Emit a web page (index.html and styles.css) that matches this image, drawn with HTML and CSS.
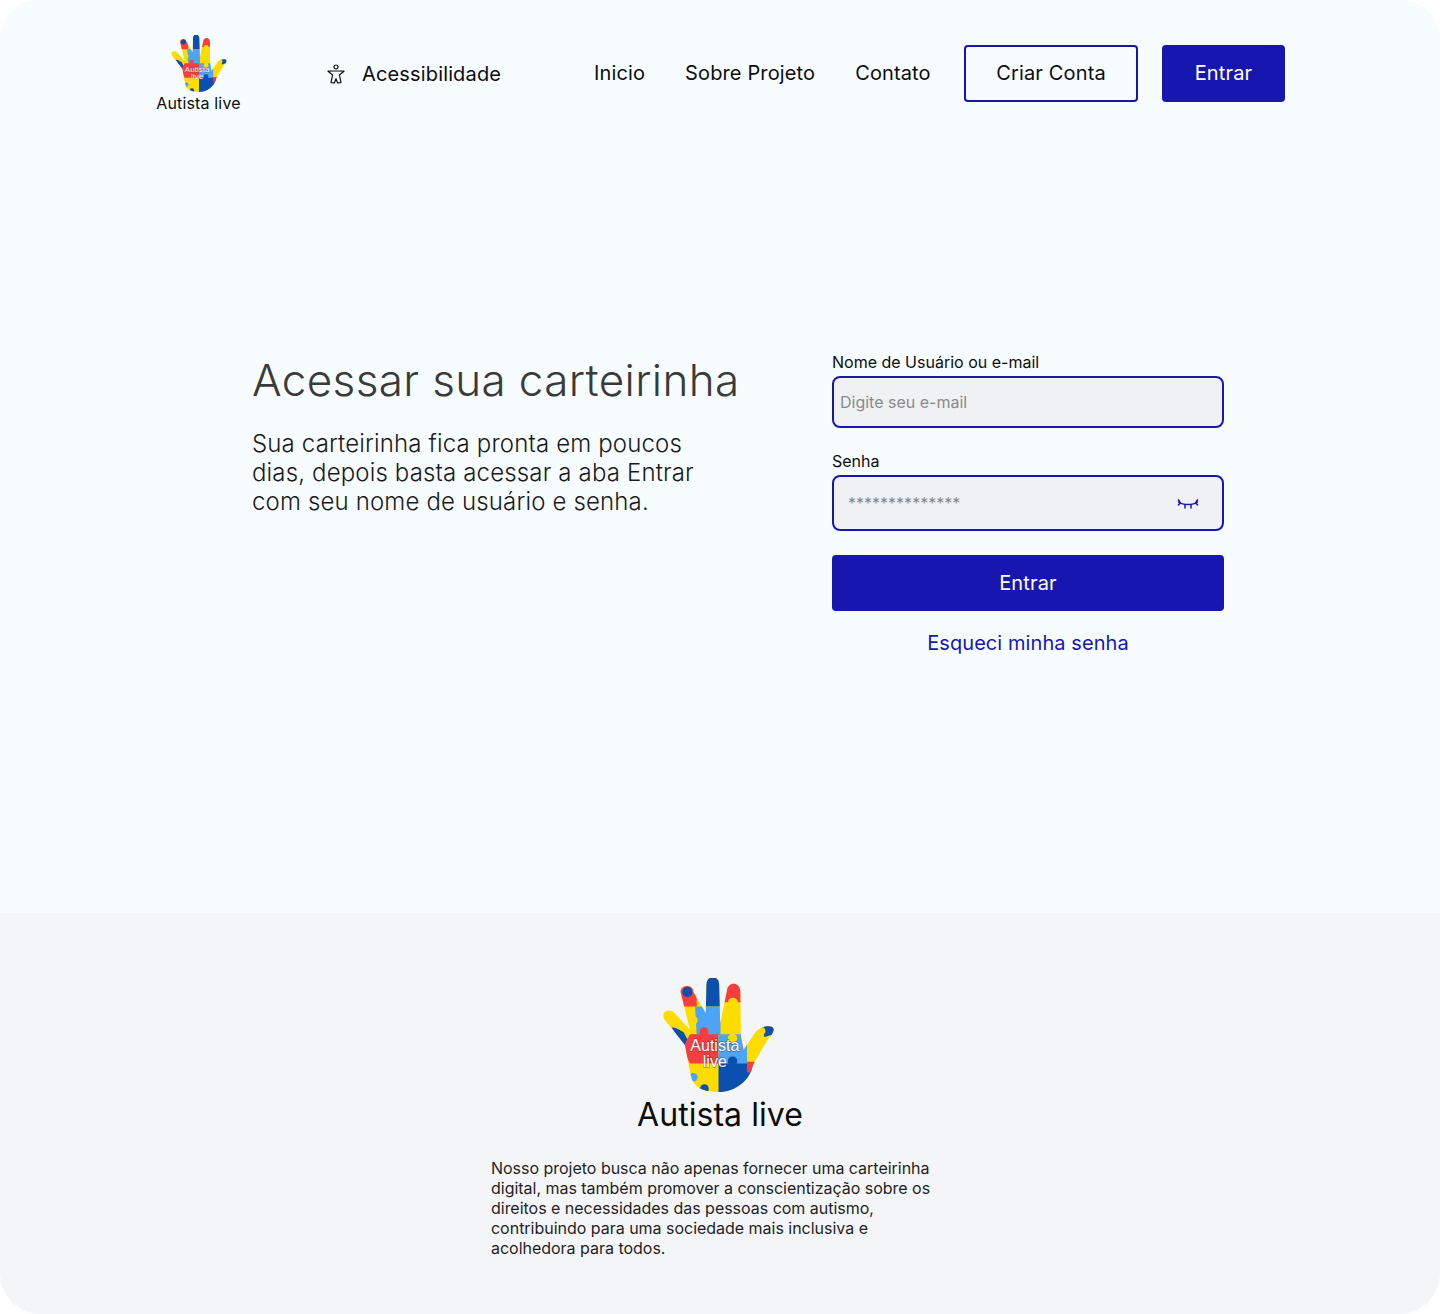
FILE: index.html
```html
<!DOCTYPE html>
<html lang="pt-BR">
<head>
<meta charset="utf-8">
<title>Autista live</title>
<link rel="stylesheet" href="styles.css">
</head>
<body>
<svg class="defs" width="0" height="0" aria-hidden="true">
  <defs>
    <clipPath id="hand">
      <path d="M122 82C122 58 160 58 160 82L197 145L199 60C199 30 237 30 237 60L240 175L260 80C262 50 298 50 300 80L302 215L310 255L345 202C355 185 400 175 400 195C398 205 392 212 385 218L337 300C330 345 285 380 235 380C185 380 160 365 152 330L135 240L75 165C60 145 85 125 105 145L150 195Z" />
    </clipPath>
    <symbol id="logo" viewBox="70 40 330 340">
      <g clip-path="url(#hand)">
        <rect x="60" y="30" width="350" height="360" fill="#ffdc00" />
        <rect x="197" y="30" width="44" height="95" fill="#0b4fb0" />
        <path d="M165 125H241V210H170Z" fill="#4da3f5" />
        <path d="M110 50H170V125H110Z" fill="#f63d3f" />
        <circle cx="142" cy="82" r="15" fill="#0b4fb0" />
        <circle cx="160" cy="166" r="13" fill="#ffdc00" />
        <path d="M250 40H305V112H250Z" fill="#f63d3f" />
        <circle cx="278" cy="114" r="15" fill="#ffdc00" />
        <path d="M95 188C112 186 122 200 130 200L152 240H130Z" fill="#0b4fb0" />
        <path d="M150 208H235V295H150L135 265V235Z" fill="#f63d3f" />
        <circle cx="192" cy="200" r="13" fill="#f63d3f" />
        <path d="M235 208H320V300H235Z" fill="#4da3f5" />
        <circle cx="277" cy="220" r="14" fill="#ffdc00" />
        <path d="M235 295H345V390H235Z" fill="#0b4fb0" />
        <circle cx="277" cy="288" r="14" fill="#0b4fb0" />
        <path d="M320 290H345L330 322H320Z" fill="#f63d3f" />
        <path d="M360 175H410V205L372 216Z" fill="#0b4fb0" />
        <circle cx="362" cy="198" r="13" fill="#ffdc00" />
        <circle cx="160" cy="336" r="13" fill="#4da3f5" />
        <circle cx="193" cy="370" r="13" fill="#0b4fb0" />
      </g>
      <text class="logo-mark" x="224" y="258">Autista</text>
      <text class="logo-mark" x="224" y="305">live</text>
    </symbol>
  </defs>
</svg>

<div class="page">
  <div class="hero">
    <header class="header">
      <a class="brand" href="#">
        <svg class="brand-mark"><use href="#logo" /></svg>
        <span class="brand-name">Autista live</span>
      </a>
      <a class="access" href="#">
        <svg class="access-icon" viewBox="0 0 18 20" fill="none" stroke="#111" stroke-width="1.2" stroke-linejoin="round">
          <circle cx="9" cy="3" r="2" />
          <path d="M1 7.2L6.4 7H11.6L17 7.2L12.4 11L14 18.6L10.6 19L9 14.6L7.4 19L4 18.6L5.6 11Z" />
        </svg>
        <span>Acessibilidade</span>
      </a>
      <nav class="nav">
        <a class="nav-link" href="#">Inicio</a>
        <a class="nav-link" href="#">Sobre Projeto</a>
        <a class="nav-link" href="#">Contato</a>
      </nav>
      <div class="actions">
        <a class="btn btn-outline" href="#">Criar Conta</a>
        <a class="btn btn-solid" href="#">Entrar</a>
      </div>
    </header>

    <main class="content">
      <section class="intro">
        <h1 class="title">Acessar sua carteirinha</h1>
        <p class="lead">Sua carteirinha fica pronta em poucos dias, depois basta acessar a aba Entrar com seu nome de usuário e senha.</p>
      </section>
      <form class="form">
        <label class="label" for="email">Nome de Usuário ou e-mail</label>
        <input class="field field-email" id="email" type="text" placeholder="Digite seu e-mail">
        <label class="label label-pass" for="pass">Senha</label>
        <div class="field field-pass">
          <input class="pass-input" id="pass" type="text" placeholder="**************">
          <svg class="eye" viewBox="0 0 22 12" fill="none" stroke="#1717af" stroke-width="1.5" stroke-linecap="round">
            <path d="M1.5 3C6 6.4 16 6.4 20.5 3" />
            <path d="M1.5 1L3.2 3.8L1.5 6" />
            <path d="M20.5 1L18.8 3.8L20.5 6" />
            <path d="M8 5.5V9M14 5.5V9" />
          </svg>
        </div>
        <a class="btn btn-solid btn-wide" href="#">Entrar</a>
        <a class="forgot" href="#">Esqueci minha senha</a>
      </form>
    </main>
  </div>

  <footer class="footer">
    <svg class="footer-mark"><use href="#logo" /></svg>
    <h2 class="footer-name">Autista live</h2>
    <p class="footer-text">Nosso projeto busca não apenas fornecer uma carteirinha digital, mas também promover a conscientização sobre os direitos e necessidades das pessoas com autismo, contribuindo para uma sociedade mais inclusiva e acolhedora para todos.</p>
  </footer>
</div>
</body>
</html>
```

FILE: styles.css
```css
* { box-sizing: border-box; }

html, body { margin: 0; padding: 0; background: #fff; }

body {
  font-family: Inter, "Liberation Sans", sans-serif;
  color: #0d0d0d;
}

a { color: inherit; text-decoration: none; }

.defs { display: block; height: 0; }

.logo-mark {
  font-family: "Liberation Sans", Arial, sans-serif;
  font-size: 48px;
  fill: #fff;
  text-anchor: middle;
  paint-order: stroke;
  stroke: rgba(60, 40, 60, 0.45);
  stroke-width: 4px;
}

.page {
  width: 1440px;
  height: 1314px;
  border-radius: 40px;
  overflow: hidden;
  background: #f4f5f7;
}

.hero { height: 913px; background: #f6fcff; }

.header {
  display: flex;
  align-items: flex-start;
  padding: 35px 155px 0 156px;
}

.brand { display: flex; flex-direction: column; align-items: center; width: 85px; }

.brand-mark { width: 56px; height: 57px; display: block; }

.brand-name {
  font-size: 16px;
  line-height: 20px;
  margin-top: 1px;
  letter-spacing: 0.15px;
  white-space: nowrap;
}

.access {
  display: flex;
  align-items: center;
  margin: 10px 0 0 86px;
  height: 57px;
  font-size: 20px;
  letter-spacing: 0.15px;
  width: 267px;
}

.access-icon { width: 18px; height: 20px; margin-right: 17px; flex: none; }

.nav { display: flex; gap: 40px; margin-top: 10px; }

.nav-link { font-size: 20px; line-height: 57px; letter-spacing: 0.13px; }

.actions { display: flex; gap: 24px; margin: 10px 0 0 auto; }

.btn {
  display: flex;
  align-items: center;
  justify-content: center;
  height: 56.5px;
  border-radius: 4px;
  font-size: 20px;
  letter-spacing: 0.15px;
}

.btn-outline { width: 174px; border: 2px solid #1717af; color: #0d0d0d; }

.btn-solid { width: 123px; background: #1717af; color: #fff; }

.btn-wide { width: 392px; height: 56px; margin-top: 24px; }

.content { display: flex; padding: 237px 0 0 252px; }

.intro { width: 580px; padding-top: 4px; }

.title {
  margin: 0;
  font-size: 44px;
  line-height: 53px;
  font-weight: 300;
  letter-spacing: 0.36px;
  color: #3a3a3a;
}

.lead {
  margin: 22px 0 0;
  width: 470px;
  font-size: 24px;
  line-height: 29px;
  font-weight: 350;
  letter-spacing: 0.15px;
  color: #1a1a1a;
}

.form { display: flex; flex-direction: column; width: 392px; }

.label { font-size: 16px; line-height: 20px; height: 26px; padding-top: 2px; }

.label-pass { margin-top: 21px; }

.field {
  width: 100%;
  border: 2px solid #1717af;
  border-radius: 8px;
  background: #f0f1f3;
  font-family: Inter, "Liberation Sans", sans-serif;
  font-size: 16px;
}

.field-email { height: 52px; padding: 0 6px; outline: none; }

.field::placeholder, .pass-input::placeholder { color: #8a8a8a; opacity: 1; }

.field-pass { display: flex; align-items: center; height: 56px; padding: 0 23px 0 14px; }

.pass-input {
  flex: 1;
  min-width: 0;
  height: 100%;
  padding: 0;
  border: 0;
  outline: none;
  background: transparent;
  font-family: Inter, "Liberation Sans", sans-serif;
  font-size: 16px;
}

.eye { width: 22px; height: 12px; flex: none; margin-top: 4px; }

.forgot {
  margin-top: 20px;
  text-align: center;
  font-size: 20px;
  line-height: 24px;
  letter-spacing: 0.08px;
  color: #1717af;
}

.footer { display: flex; flex-direction: column; align-items: center; padding-top: 65px; }

.footer-mark { width: 111px; height: 114px; display: block; margin-left: -3px; }

.footer-name {
  margin: 3px 0 0;
  font-size: 32px;
  line-height: 39px;
  font-weight: 400;
  letter-spacing: 0.05px;
}

.footer-text {
  width: 458px;
  margin: 24px 0 0;
  font-size: 16px;
  line-height: 20px;
  letter-spacing: -0.02px;
  color: #1f1f1f;
}
```
